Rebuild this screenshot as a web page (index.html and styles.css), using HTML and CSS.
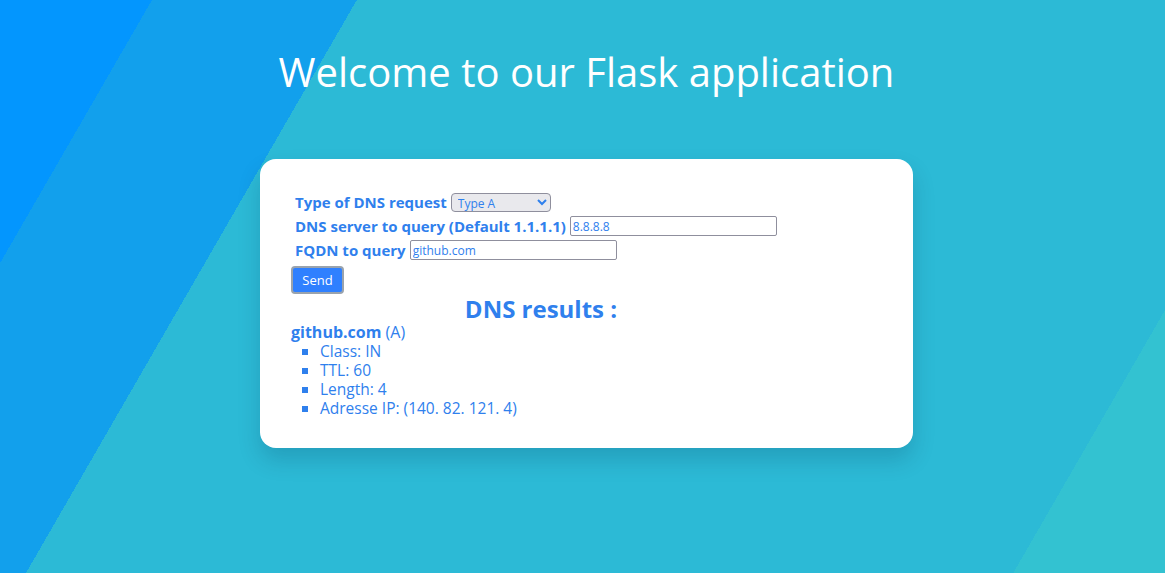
FILE: index.html
```html
<!DOCTYPE html>
<html lang="en">
<head>
<meta charset="utf-8">
<title>Flask DNS</title>
<link rel="stylesheet" href="styles.css">
</head>
<body>
<div class="page">
  <h1 class="title">Welcome to our Flask application</h1>
  <div class="card">
    <form class="dns-form">
      <div class="row">
        <label class="lbl" for="qtype">Type of DNS request</label>
        <select id="qtype" class="select">
          <option>Type A</option>
        </select>
      </div>
      <div class="row">
        <label class="lbl" for="server">DNS server to query (Default 1.1.1.1)</label>
        <input id="server" class="field" type="text" value="8.8.8.8">
      </div>
      <div class="row">
        <label class="lbl" for="fqdn">FQDN to query</label>
        <input id="fqdn" class="field" type="text" value="github.com">
      </div>
      <button class="send" type="button">Send</button>
    </form>
    <div class="results">
      <h2 class="results-title">DNS results :</h2>
      <div class="record"><b>github.com</b> (A)</div>
      <ul class="record-list">
        <li>Class: IN</li>
        <li>TTL: 60</li>
        <li>Length: 4</li>
        <li>Adresse IP: (140. 82. 121. 4)</li>
      </ul>
    </div>
  </div>
</div>
</body>
</html>
```
FILE: styles.css
```css
html, body {
  margin: 0;
  padding: 0;
}
body {
  min-height: 100vh;
  font-family: "Open Sans", "Noto Sans", sans-serif;
  background: linear-gradient(120deg,
    #0396fe 0, #0396fe 131.6px,
    #12a0ec 131.6px, #12a0ec 309px,
    #2cbad6 309px, #2cbad6 1164px,
    #33c2d1 1164px);
}
.page {
  padding: 1px 0 0 8px;
}
.title {
  margin: 44px 0 0;
  text-align: center;
  color: #fff;
  font-weight: 400;
  font-size: 40px;
  line-height: 54px;
}
.card {
  width: 653px;
  box-sizing: border-box;
  margin: 60px auto 0;
  padding: 31px 31px 30px;
  background: #fff;
  border-radius: 16px;
  box-shadow: 0 12px 22px rgba(0, 40, 70, 0.18);
  color: #2f80ed;
}
.dns-form {
  display: flex;
  flex-direction: column;
  align-items: flex-start;
}
.row {
  display: flex;
  align-items: center;
  gap: 4px;
  height: 24px;
  padding-left: 4px;
}
.lbl {
  font-weight: 700;
  font-size: 15px;
}
.select {
  width: 100px;
  height: 19px;
  font: 12px "Open Sans", sans-serif;
  color: #2f80ed;
  padding: 0 2px;
  background: #e9e9ed;
  border: 1px solid #8f8f9d;
  border-radius: 4px;
}
.field {
  width: 207px;
  height: 20px;
  box-sizing: border-box;
  font: 12px "Open Sans", sans-serif;
  color: #2f80ed;
  padding: 0 2px;
  border: 1px solid #8f8f9d;
  border-radius: 2px;
  background: #fff;
}
.send {
  margin-top: 4px;
  width: 53px;
  height: 28px;
  background: #2f80ff;
  color: #fff;
  font: 13px "Open Sans", sans-serif;
  border: 2px solid #9aa3ad;
  border-radius: 4px;
  padding: 0;
}
.results {
  width: 500px;
}
.results-title {
  margin: 1px 0 0;
  text-align: center;
  font-size: 24px;
  font-weight: 700;
  line-height: 28px;
}
.record {
  font-size: 16px;
  line-height: 19px;
}
.record-list {
  margin: 0;
  padding-left: 29px;
  list-style: square;
  font-size: 15.5px;
  line-height: 19px;
}
```
